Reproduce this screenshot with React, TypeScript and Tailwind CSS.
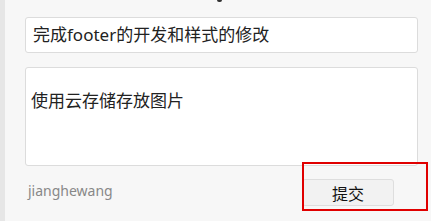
export default function App() {
  return (
    <div className="relative flex h-[221px] w-[431px] overflow-hidden bg-[#f7f7f7] font-['Noto_Sans','Noto_Sans_CJK_SC',sans-serif]">
      <div className="w-[5px] shrink-0 bg-[#e6e6e6]" />
      <div className="flex w-[393px] flex-col pl-[20px]">
        {/* tail of the heading above */}
        <div className="ml-[192px] h-[2px] w-[5px] rounded-b bg-[#333]" />
        <div className="mt-[15px] flex h-[36px] w-[393px] items-center rounded-[3px] border border-[#dcdcdc] bg-white px-[7px] text-[17px] text-[#222]">
          完成footer的开发和样式的修改
        </div>
        <div className="mt-[14px] h-[99px] w-[393px] rounded-[3px] border border-[#dcdcdc] bg-white px-[5px] pt-[23px] text-[17px] leading-[20px] text-[#222]">
          使用云存储存放图片
        </div>
        <div className="mt-[13px] flex items-start justify-between">
          <span className="ml-[3px] mt-[2px] text-[14px] leading-[20px] text-[#888]">jianghewang</span>
          <button
            type="button"
            className="mr-[4px] h-[27px] w-[92px] rounded-[3px] border border-[#dedede] bg-[#f2f2f2] text-[16px] leading-none text-[#111] font-['Noto_Sans_CJK_SC',sans-serif]"
          >
            提交
          </button>
        </div>
      </div>
      {/* annotation */}
      <div className="absolute left-[302px] top-[162px] h-[49px] w-[126px] border-2 border-[#e00000]" />
    </div>
  );
}
